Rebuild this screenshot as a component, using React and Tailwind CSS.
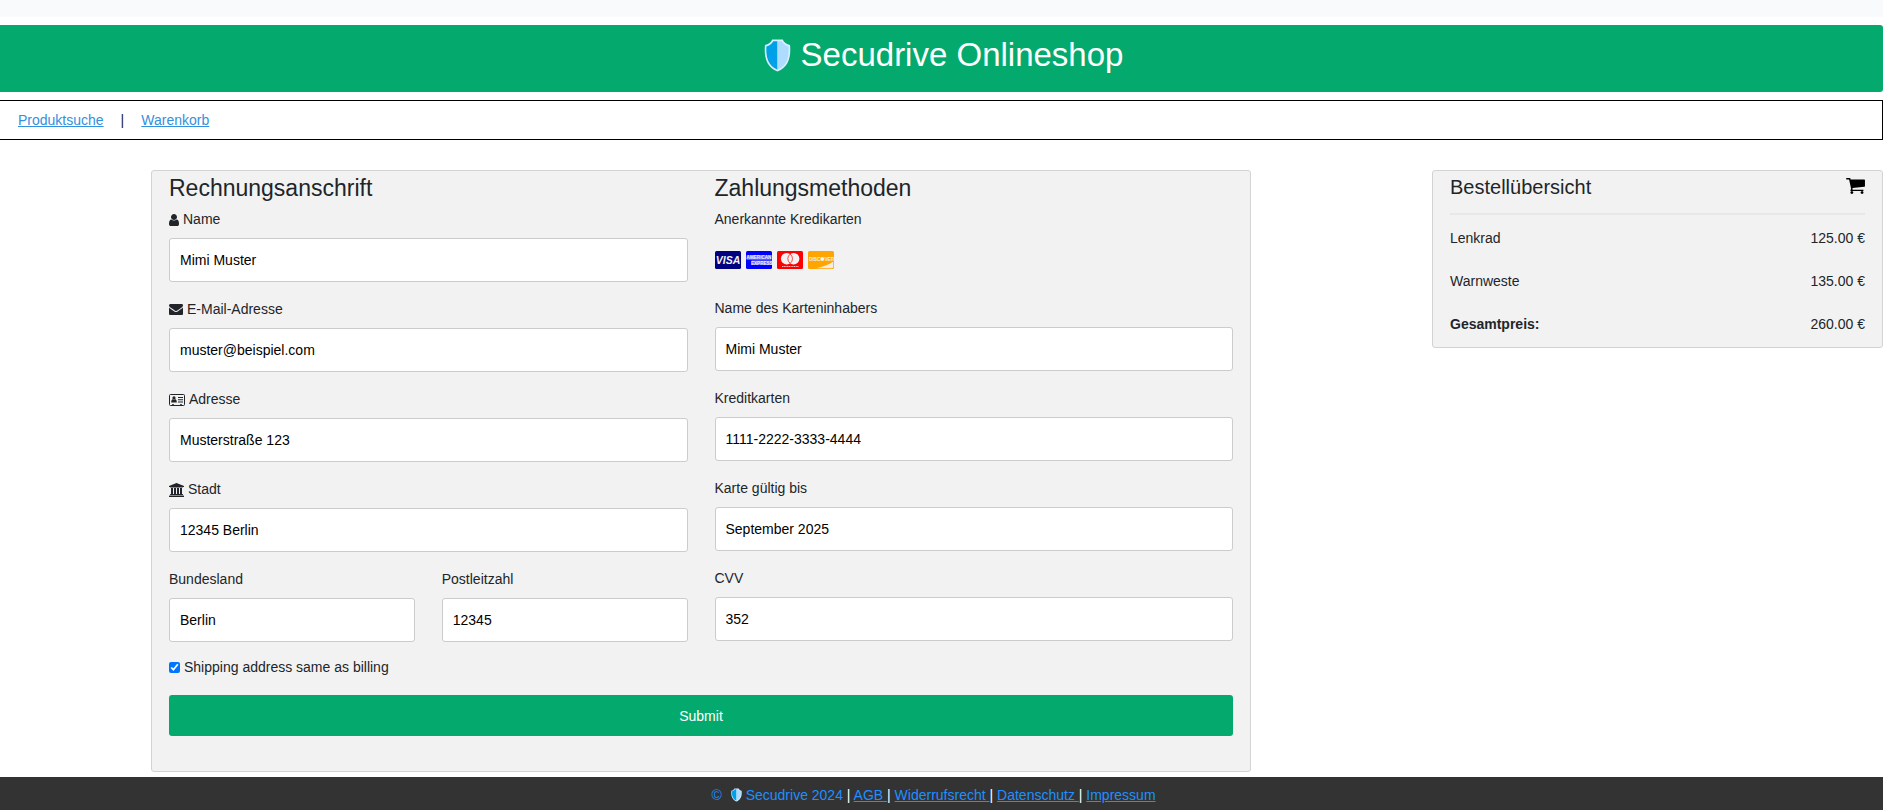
import React from "react";

function Shield({ className }) {
  return (
    <svg viewBox="0 0 28 34" className={className} aria-hidden="true">
      <path
        d="M14 .5H19.5C20.5 3.2 23.4 5.6 27 6.2C28.2 19 25.2 29.2 14 33.5C2.8 29.2-.2 19 1 6.2C4.6 5.6 7.5 3.2 8.500 .5Z"
        fill="#d9efff"
      />
      <path d="M14 2.300H9.600C8.400 4.800 5.600 7 2.500 7.600C1.800 18.500 4.400 27.800 14 31.700Z" fill="#00a0e9" />
      <path d="M14 2.300H18.400C19.600 4.800 22.400 7 25.500 7.600C26.200 18.500 23.600 27.800 14 31.700Z" fill="#aedcff" />
    </svg>
  );
}

function UserIcon() {
  return (
    <svg viewBox="256 128 1280 1536" className="h-3 w-2.5" fill="currentColor" aria-hidden="true">
      <path d="M1536 1399q0 109-62.5 187t-150.5 78h-854q-88 0-150.5-78t-62.5-187q0-85 8.5-160.5t31.5-152 58.500-131 94-89 134.500-34.500q131 128 313 128t313-128q76 0 134.500 34.500t94 89 58.500 131 31.500 152 8.500 160.500zm-256-887q0 159-112.500 271.500t-271.500 112.500-271.500-112.500-112.500-271.500 112.500-271.500 271.500-112.500 271.500 112.500 112.500 271.500z" />
    </svg>
  );
}

function EnvelopeIcon() {
  return (
    <svg viewBox="0 256 1792 1408" className="h-[11px] w-3.5" fill="currentColor" aria-hidden="true">
      <path d="M1792 710v794q0 66-47 113t-113 47h-1472q-66 0-113-47t-47-113v-794q44 49 101 87 362 246 497 345 57 42 92.500 65.500t94.500 48 110 24.500h2q51 0 110-24.500t94.500-48 92.500-65.500q170-123 498-345 57-39 100-87zm0-294q0 79-49 151t-122 123q-376 261-468 325-10 7-42.500 31t-54 38.500-52 32.500-57.500 27-50 9h-2q-23 0-50-9t-57.500-27-52-32.500-54-38.500-42.500-31q-91-64-262-182.500t-205-142.500q-62-42-117-115.500t-55-136.500q0-78 41.500-130t118.500-52h1472q65 0 112.500 47t47.500 113z" />
    </svg>
  );
}

function AddressCardIcon() {
  return (
    <svg viewBox="0 0 16 12" className="h-3 w-4" fill="currentColor" aria-hidden="true">
      <rect x="0.500" y="0.500" width="15" height="11" rx="1" fill="none" stroke="currentColor" />
      <path d="M3 10.200h2v1.300H3zM11 10.200h2v1.300h-2z" />
      <circle cx="5" cy="3.900" r="1.600" />
      <path d="M2.200 8.600c0-2 .6-3.300 1.500-3.400.8.600 1.800.6 2.600 0 .9.100 1.500 1.400 1.500 3.400z" />
      <path d="M9 3h5v1H9zM9 5.200h5v1H9zM9 7.400h5v1H9z" />
    </svg>
  );
}

function BankIcon() {
  return (
    <svg viewBox="0 0 1920 1792" className="h-3.5 w-[15px]" fill="currentColor" aria-hidden="true">
      <path d="M960 0l960 384v128h-128q0 26-20.500 45t-48.500 19h-1526q-28 0-48.500-19t-20.500-45h-128v-128zm-704 640h256v768h128v-768h256v768h128v-768h256v768h128v-768h256v768h59q28 0 48.500 19t20.500 45v64h-1664v-64q0-26 20.500-45t48.500-19h59v-768zm1595 960q28 0 48.500 19t20.500 45v128h-1920v-128q0-26 20.500-45t48.500-19h1782z" />
    </svg>
  );
}

function CartIcon() {
  return (
    <svg viewBox="64 256 1664 1408" className="h-4 w-[19px]" fill="#000" aria-hidden="true">
      <path d="M704 1536q0 52-38 90t-90 38-90-38-38-90 38-90 90-38 90 38 38 90zm896 0q0 52-38 90t-90 38-90-38-38-90 38-90 90-38 90 38 38 90zm128-1088v512q0 24-16.500 42.500t-40.500 21.500l-1044 122q13 60 13 70 0 16-24 64h920q26 0 45 19t19 45-19 45-45 19h-1024q-26 0-45-19t-19-45q0-11 8-31.500t16-36 21.500-40 15.500-29.500l-177-823h-204q-26 0-45-19t-19-45 19-45 45-19h256q16 0 28.500 6.500t19.500 15.500 13 24.500 8 26 5.500 29.500 4.500 26h1201q26 0 45 19t19 45z" />
    </svg>
  );
}

const brandText = { fontFamily: "'Liberation Sans', sans-serif", fontWeight: 700, fill: "#f2f2f2" };

function CreditCards() {
  return (
    <div className="flex gap-[5px]">
      <svg viewBox="0 0 26 18" className="h-[18px] w-[26px]" role="img" aria-label="Visa">
        <rect width="26" height="18" rx="1.500" fill="#000080" />
        <text x="13" y="12.800" textAnchor="middle" fontSize="10.500" fontStyle="italic" style={brandText}>VISA</text>
      </svg>
      <svg viewBox="0 0 26 18" className="h-[18px] w-[26px]" role="img" aria-label="American Express">
        <rect width="26" height="18" rx="1.500" fill="#0000ff" />
        <rect x="0.500" y="4.200" width="25" height="4.600" fill="#f2f2f2" opacity="0.450" />
        <rect x="5.500" y="9.400" width="20.500" height="4.600" fill="#f2f2f2" opacity="0.450" />
        <text x="13" y="8.300" textAnchor="middle" fontSize="4.600" style={brandText}>AMERICAN</text>
        <text x="15.800" y="13.500" textAnchor="middle" fontSize="4.600" style={brandText}>EXPRESS</text>
      </svg>
      <svg viewBox="0 0 26 18" className="h-[18px] w-[26px]" role="img" aria-label="Mastercard">
        <rect width="26" height="18" rx="1.500" fill="#ff0000" />
        <circle cx="9.700" cy="7.700" r="5.800" fill="#f2f2f2" />
        <circle cx="16.600" cy="7.700" r="5.800" fill="#f2f2f2" />
        <path d="M13.150 3.050A5.800 5.800 0 0 1 13.150 12.350A5.800 5.800 0 0 1 13.150 3.050Z" fill="#f2f2f2" stroke="#ff0000" strokeWidth="0.700" />
        <path d="M5 15.500h16.500" stroke="#f2f2f2" strokeWidth="1.200" strokeDasharray="1.200 0.500" opacity="0.800" />
      </svg>
      <svg viewBox="0 0 26 18" className="h-[18px] w-[26px]" role="img" aria-label="Discover">
        <rect width="26" height="18" rx="1.500" fill="#ffa500" />
        <path d="M8 17.300C15 16 21 13.500 25.300 10.500V16a1.300 1.300 0 0 1-1.300 1.300Z" fill="#f6ebdc" />
        <text x="1" y="9.600" fontSize="4.800" style={brandText}>DISC</text>
        <circle cx="14.200" cy="8" r="2" fill="#f2f2f2" />
        <text x="16.400" y="9.600" fontSize="4.800" style={brandText}>VER</text>
      </svg>
    </div>
  );
}

function Field({ id, label, value, icon, type = "text" }) {
  return (
    <div>
      <label htmlFor={id} className="mb-2 flex items-center gap-1 leading-[21px]">
        {icon}
        {label}
      </label>
      <input
        id={id}
        type={type}
        defaultValue={value}
        className="block h-11 w-full rounded-[3px] border border-[#cccccc] bg-white px-2.5 text-black"
      />
    </div>
  );
}

const links = ["AGB", "Widerrufsrecht", "Datenschutz", "Impressum"];
const items = [
  ["Lenkrad", "125.00 €"],
  ["Warnweste", "135.00 €"],
];

export default function App() {
  return (
    <div className="flex min-h-screen flex-col bg-[#f8fafc] pt-[17px] font-['Liberation_Sans',Arial,sans-serif] text-sm text-[#212529]">
      <div className="flex grow flex-col bg-white pt-2">
        <header className="flex items-start justify-center rounded-r-[3px] bg-[#04aa6d] pt-2.5 pb-[17px] text-white">
          <h1 className="flex items-center gap-2.5 pl-1 text-[33px] leading-10">
            <Shield className="h-[33px] w-[27px]" />
            Secudrive Onlineshop
          </h1>
        </header>

        <nav className="mt-2 flex items-center gap-[17px] border border-l-0 border-black px-[18px] py-2 leading-[22px]">
          <a href="#suche" className="text-[#3490dc] underline">Produktsuche</a>
          <span>|</span>
          <a href="#warenkorb" className="text-[#3490dc] underline">Warenkorb</a>
        </nav>

        <main className="mt-[30px] mb-[5px] grid grid-cols-[1100fr_451fr] items-start gap-x-[181px] pl-[151px]">
          <form
            className="rounded-[3px] border border-[#d3d3d3] bg-[#f2f2f2] px-[17px] pt-[3px] pb-[35px]"
            onSubmit={(e) => e.preventDefault()}
          >
            <div className="grid grid-cols-2 gap-x-[27px]">
              <section>
                <h2 className="mb-[7px] text-[23px] leading-7">Rechnungsanschrift</h2>
                <div className="flex flex-col gap-[17px]">
                  <Field id="name" label="Name" value="Mimi Muster" icon={<UserIcon />} />
                  <Field id="email" label="E-Mail-Adresse" value="muster@beispiel.com" icon={<EnvelopeIcon />} />
                  <Field id="adresse" label="Adresse" value="Musterstraße 123" icon={<AddressCardIcon />} />
                  <Field id="stadt" label="Stadt" value="12345 Berlin" icon={<BankIcon />} />
                  <div className="grid grid-cols-2 gap-x-[27px]">
                    <Field id="land" label="Bundesland" value="Berlin" />
                    <Field id="plz" label="Postleitzahl" value="12345" />
                  </div>
                </div>
              </section>

              <section>
                <h2 className="mb-[7px] text-[23px] leading-7">Zahlungsmethoden</h2>
                <p className="mb-[21px] leading-[21px]">Anerkannte Kredikarten</p>
                <CreditCards />
                <div className="mt-[29px] flex flex-col gap-[17px]">
                  <Field id="inhaber" label="Name des Karteninhabers" value="Mimi Muster" />
                  <Field id="karte" label="Kreditkarten" value="1111-2222-3333-4444" />
                  <Field id="gueltig" label="Karte gültig bis" value="September 2025" />
                  <Field id="cvv" label="CVV" value="352" />
                </div>
              </section>
            </div>

            <label className="mt-[15px] flex w-fit items-center gap-1 leading-[21px]">
              <input type="checkbox" defaultChecked className="size-[11px]" />
              Shipping address same as billing
            </label>
            <button type="submit" className="mt-[17px] h-[41px] w-full rounded-[3px] bg-[#04aa6d] text-white">
              Submit
            </button>
          </form>

          <aside className="rounded-[3px] border border-[#d3d3d3] bg-[#f2f2f2] px-[17px] pt-1 pb-3">
            <div className="flex items-start justify-between pt-[3px]">
              <h2 className="text-xl leading-[18px]">Bestellübersicht</h2>
              <CartIcon />
            </div>
            <hr className="mt-[17px] border-t-2 border-[#e8e8e8]" />
            <dl className="mt-[13px] flex flex-col gap-[22px] leading-[21px]">
              {items.map(([name, price]) => (
                <div key={name} className="flex justify-between">
                  <dt>{name}</dt>
                  <dd>{price}</dd>
                </div>
              ))}
              <div className="flex justify-between">
                <dt className="font-bold">Gesamtpreis:</dt>
                <dd>260.00 €</dd>
              </div>
            </dl>
          </aside>
        </main>

        <footer className="mt-auto bg-[#333333] pt-2 pr-4 pb-1 text-center leading-[21px] text-white">
          <span className="text-[#1e90ff]">
            © <Shield className="mr-1 ml-[5px] inline h-3.5 w-[11px] align-[-2px]" />
            Secudrive 2024{" "}
          </span>
          {links.map((name, i) => (
            <React.Fragment key={name}>
              {"| "}
              <a href={"#" + name.toLowerCase()} className="whitespace-pre text-[#1e90ff] underline">
                {i < links.length - 1 ? name + " " : name}
              </a>
            </React.Fragment>
          ))}
        </footer>
      </div>
    </div>
  );
}
